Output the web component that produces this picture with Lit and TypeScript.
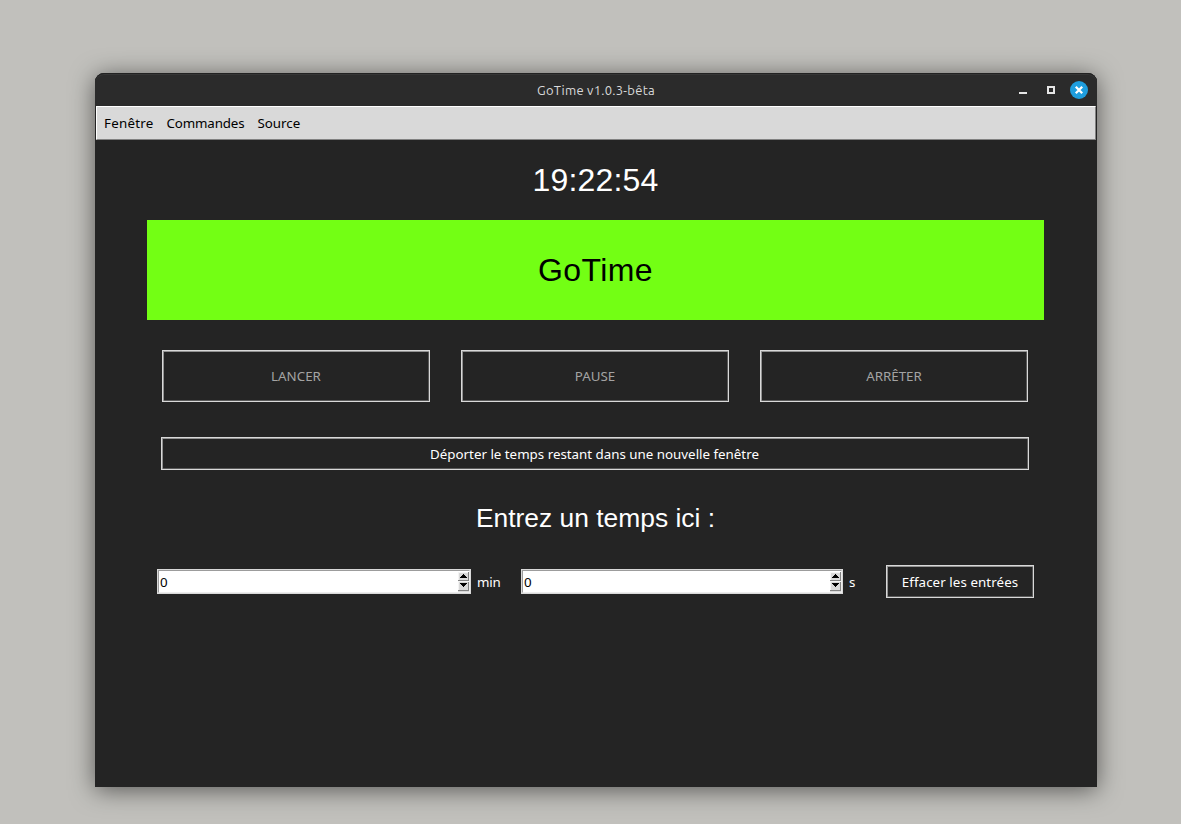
import { LitElement, html, css } from "lit";
import { customElement, property } from "lit/decorators.js";

@customElement("spin-box")
class SpinBox extends LitElement {
  @property() value = "0";

  static styles = css`
    :host {
      display: flex;
      box-sizing: border-box;
      height: 25px;
      border: 1px solid #d9d9d9;
    }
    .field {
      flex: 1;
      display: flex;
      align-items: center;
      box-sizing: border-box;
      border: 1px solid;
      border-color: #9c9c9c #ececec #ececec #9c9c9c;
      background: #fff;
      color: #000;
      padding: 1px 0 0 1px;
    }
    .value {
      flex: 1;
      line-height: 20px;
    }
    .arrows {
      display: block;
      align-self: flex-start;
    }
  `;

  render() {
    return html`
      <div class="field">
        <span class="value">${this.value}</span>
        <svg class="arrows" width="11" height="20" viewBox="0 0 11 20" shape-rendering="crispEdges">
          <rect width="11" height="20" fill="#d9d9d9" />
          <path d="M0 8.5H11M10.5 0V9M0 18.5H11M10.5 10V19" stroke="#828282" />
          <path d="M0 .5H10M.5 0V8M0 9.5H11M.5 9V18" stroke="#f4f4f4" />
          <path d="M5 2h1v1h1v1h1v1h1v1H2V5h1V4h1V3h1zM2 11h7v1H8v1H7v1H6v1H5v-1H4v-1H3v-1H2z" fill="#000" />
        </svg>
      </div>
    `;
  }
}

@customElement("app-root")
class AppRoot extends LitElement {
  static styles = css`
    :host {
      display: block;
      box-sizing: border-box;
      width: 1181px;
      height: 824px;
      padding: 73px 84px 37px 95px;
      overflow: hidden;
      background: #c1c0bc;
      font: 13.33px "Noto Sans", sans-serif;
      color: #fff;
    }
    .window {
      box-sizing: border-box;
      height: 714px;
      border-radius: 9px 9px 0 0;
      background: #242424;
      box-shadow: 0 3px 24px rgba(0, 0, 0, 0.55);
    }
    .titlebar {
      display: grid;
      grid-template-columns: 1fr auto 1fr;
      align-items: center;
      height: 33px;
      box-sizing: border-box;
      border-radius: 9px 9px 0 0;
      background: #2b2b2b;
      box-shadow: inset 0 1px #222, inset 0 2px #363636;
      padding: 1px 8px 0;
    }
    .title {
      grid-column: 2;
      font-family: Ubuntu, "Noto Sans", sans-serif;
      font-size: 13px;
      letter-spacing: 0.25px;
      color: #dadada;
    }
    .controls {
      justify-self: end;
      display: block;
    }
    .menubar {
      display: flex;
      align-items: center;
      gap: 13px;
      height: 34px;
      box-sizing: border-box;
      margin: 0 1px;
      padding: 0 7px;
      border: 1px solid;
      border-color: #fff #828282 #828282 #fff;
      background: #d9d9d9;
      color: #000;
    }
    .menu-window {
      letter-spacing: 0.25px;
    }
    .menu-commands {
      letter-spacing: -0.15px;
    }
    .content {
      display: flex;
      flex-direction: column;
      margin: 0 53px 0 52px;
      text-align: center;
    }
    .clock {
      height: 80px;
      line-height: 80px;
      font-family: "Liberation Sans", Arial, sans-serif;
      font-size: 32px;
      letter-spacing: 0.15px;
    }
    .banner {
      height: 100px;
      line-height: 100px;
      background: #73ff14;
      color: #000;
      font-family: "Liberation Sans", Arial, sans-serif;
      font-size: 32px;
      letter-spacing: 0.4px;
    }
    .actions {
      display: grid;
      grid-template-columns: repeat(3, 268px);
      gap: 31px;
      margin: 30px 15px 0;
    }
    .button {
      box-sizing: border-box;
      padding: 0;
      border: 1px solid #d9d9d9;
      background: #242424;
      box-shadow: inset 1px 1px #929292, inset -1px -1px #5a5a5a;
      color: #fff;
      font: inherit;
      height: 33px;
    }
    .button:disabled {
      height: 52px;
      color: #a3a3a3;
    }
    .wide {
      margin: 35px 15px 0 14px;
      padding-right: 1px;
    }
    .prompt {
      height: 95px;
      line-height: 97px;
      font-family: "Liberation Sans", Arial, sans-serif;
      font-size: 26.4px;
    }
    .entries {
      display: flex;
      align-items: center;
      text-align: left;
      padding: 0 10px;
    }
    .minutes {
      width: 314px;
    }
    .seconds {
      width: 322px;
    }
    .unit {
      box-sizing: border-box;
      padding-left: 6px;
      width: 50px;
      letter-spacing: -0.2px;
    }
    .unit-s {
      width: 43px;
    }
    .clear {
      width: 148px;
      letter-spacing: 0.08px;
    }
  `;

  render() {
    return html`
      <div class="window">
        <div class="titlebar">
          <span class="title">GoTime v1.0.3-bêta</span>
          <svg class="controls" width="70" height="20" viewBox="0 0 70 20">
            <path d="M0 12h8v2H0z" fill="#e6e6e6" />
            <path d="M29 7h6v6h-6z" fill="none" stroke="#e6e6e6" stroke-width="2" />
            <circle cx="60" cy="10" r="9" fill="#1f9ede" />
            <path d="M56.8 6.8l6.4 6.4M63.2 6.8l-6.4 6.4" stroke="#fff" stroke-width="2.3" />
          </svg>
        </div>
        <div class="menubar">
          <span class="menu-window">Fenêtre</span>
          <span class="menu-commands">Commandes</span>
          <span>Source</span>
        </div>
        <div class="content">
          <div class="clock">19:22:54</div>
          <div class="banner">GoTime</div>
          <div class="actions">
            <button class="button" disabled>LANCER</button>
            <button class="button" disabled>PAUSE</button>
            <button class="button" disabled>ARRÊTER</button>
          </div>
          <button class="button wide">Déporter le temps restant dans une nouvelle fenêtre</button>
          <div class="prompt">Entrez un temps ici :</div>
          <div class="entries">
            <spin-box class="minutes"></spin-box>
            <span class="unit">min</span>
            <spin-box class="seconds"></spin-box>
            <span class="unit unit-s">s</span>
            <button class="button clear">Effacer les entrées</button>
          </div>
        </div>
      </div>
    `;
  }
}
